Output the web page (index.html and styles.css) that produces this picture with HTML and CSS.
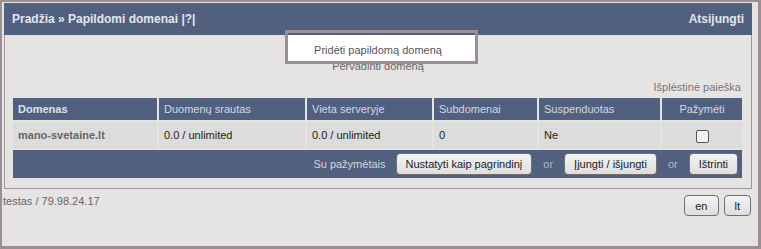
FILE: index.html
```html
<!DOCTYPE html>
<html lang="lt">
<head>
	<meta charset="utf-8">
	<title>Papildomi domenai</title>
	<link rel="stylesheet" href="styles.css">
</head>
<body>
	<div class="frame">
		<div class="top">
			<div class="crumbs">Pradžia » Papildomi domenai |?|</div>
			<a class="logout" href="#">Atsijungti</a>
		</div>

		<div class="panel">
			<div class="hilite"></div>
			<div class="links">
				<a class="add" href="#">Pridėti papildomą domeną</a>
				<a href="#">Pervadinti domeną</a>
			</div>
			<div class="search"><a href="#">Išplėstinė paieška</a></div>

			<table class="list">
				<colgroup>
					<col style="width: 144px">
					<col style="width: 146px">
					<col style="width: 125px">
					<col style="width: 103px">
					<col style="width: 121px">
					<col style="width: 80px">
				</colgroup>
				<thead>
					<tr>
						<th class="main">Domenas</th>
						<th>Duomenų srautas</th>
						<th>Vieta serveryje</th>
						<th>Subdomenai</th>
						<th>Suspenduotas</th>
						<th class="mid">Pažymėti</th>
					</tr>
				</thead>
				<tbody>
					<tr>
						<td class="dom">mano-svetaine.lt</td>
						<td>0.0 / unlimited</td>
						<td>0.0 / unlimited</td>
						<td>0</td>
						<td>Ne</td>
						<td class="mid"><input type="checkbox" class="tick"></td>
					</tr>
				</tbody>
				<tfoot>
					<tr>
						<td colspan="6">
							<div class="actions">
								<span class="label">Su pažymėtais</span>
								<button class="btn">Nustatyti kaip pagrindinį</button>
								<span class="or">or</span>
								<button class="btn">Įjungti / išjungti</button>
								<span class="or">or</span>
								<button class="btn">Ištrinti</button>
							</div>
						</td>
					</tr>
				</tfoot>
			</table>
		</div>

		<div class="bottom">
			<span class="who">testas / 79.98.24.17</span>
			<div class="langs">
				<button class="btn small">en</button>
				<button class="btn small">lt</button>
			</div>
		</div>
	</div>
</body>
</html>
```

FILE: styles.css
```css
html, body {
	margin: 0;
	background: #e6e3e3;
	font: 11px "Liberation Sans", Arial, sans-serif;
	color: #333;
}

a {
	color: inherit;
	text-decoration: none;
}

.frame {
	box-sizing: border-box;
	width: 761px;
	height: 249px;
	border: solid #9b8f95;
	border-width: 2px 3px 3px 2px;
	padding: 1px 6px 0 2px;
}

/* header bar */
.top {
	display: flex;
	justify-content: space-between;
	align-items: center;
	height: 32px;
	padding: 0 8px;
	background: #526080;
	color: #e3e6ec;
	font-size: 12px;
	font-weight: bold;
}

.panel {
	position: relative;
	border: 1px solid #9c9a9b;
	border-top: 0;
	padding: 7px 0 8px 0;
}

.hilite {
	position: absolute;
	z-index: 1;
	left: 280px;
	top: -5px;
	box-sizing: border-box;
	width: 193px;
	height: 34px;
	border: 3px solid #9b8f95;
	background: linear-gradient(transparent 2px, #fff 2px);
}

.links {
	display: flex;
	flex-direction: column;
	align-items: center;
	line-height: 16px;
	color: #666;
}

.links .add {
	position: relative;
	z-index: 2;
	color: #555;
}

.search {
	margin: 5px 0 1px;
	padding-right: 10px;
	text-align: right;
	line-height: 16px;
	color: #777;
}

/* domain table */
.list {
	table-layout: fixed;
	width: 733px;
	margin-left: 6px;
	border-spacing: 2px;
	font-size: inherit;
}

.list th {
	height: 22px;
	padding: 0 5px;
	background: #526080;
	color: #d3d8e2;
	font-weight: normal;
	text-align: left;
}

.list th.main {
	font-weight: bold;
	color: #dde1e8;
}

.list td {
	height: 26px;
	padding: 0 5px;
	background: #dddcdc;
	color: #222;
}

.list td.dom {
	font-weight: bold;
	color: #666;
}

.list .mid {
	text-align: center;
}

.tick {
	appearance: none;
	box-sizing: border-box;
	width: 13px;
	height: 13px;
	margin: 2px 0 0 1px;
	border: 1px solid #555;
	border-radius: 2px;
	background: #f3f3f3;
	vertical-align: middle;
}

.list tfoot td {
	height: 28px;
	padding: 0 4px 0 0;
	background: #526080;
}

.actions {
	display: flex;
	justify-content: flex-end;
	align-items: center;
}

.actions .label {
	margin-right: 10px;
	color: #d0d4de;
}

.actions .or {
	margin: 0 11px;
	color: #b4bac8;
}

.btn {
	height: 22px;
	padding: 0 9px;
	border: 1px solid #6f6f6f;
	border-radius: 4px;
	background: linear-gradient(#f4f4f4, #dedede);
	color: #222;
	font: 11px "Liberation Sans", Arial, sans-serif;
}

/* footer line */
.bottom {
	display: flex;
	justify-content: space-between;
	align-items: flex-start;
	margin-top: 6px;
}

.who {
	margin-left: -1px;
	color: #666;
}

.langs {
	display: flex;
	gap: 5px;
	margin-right: 1px;
}

.btn.small {
	height: 21px;
	padding: 0 10px;
}
```
